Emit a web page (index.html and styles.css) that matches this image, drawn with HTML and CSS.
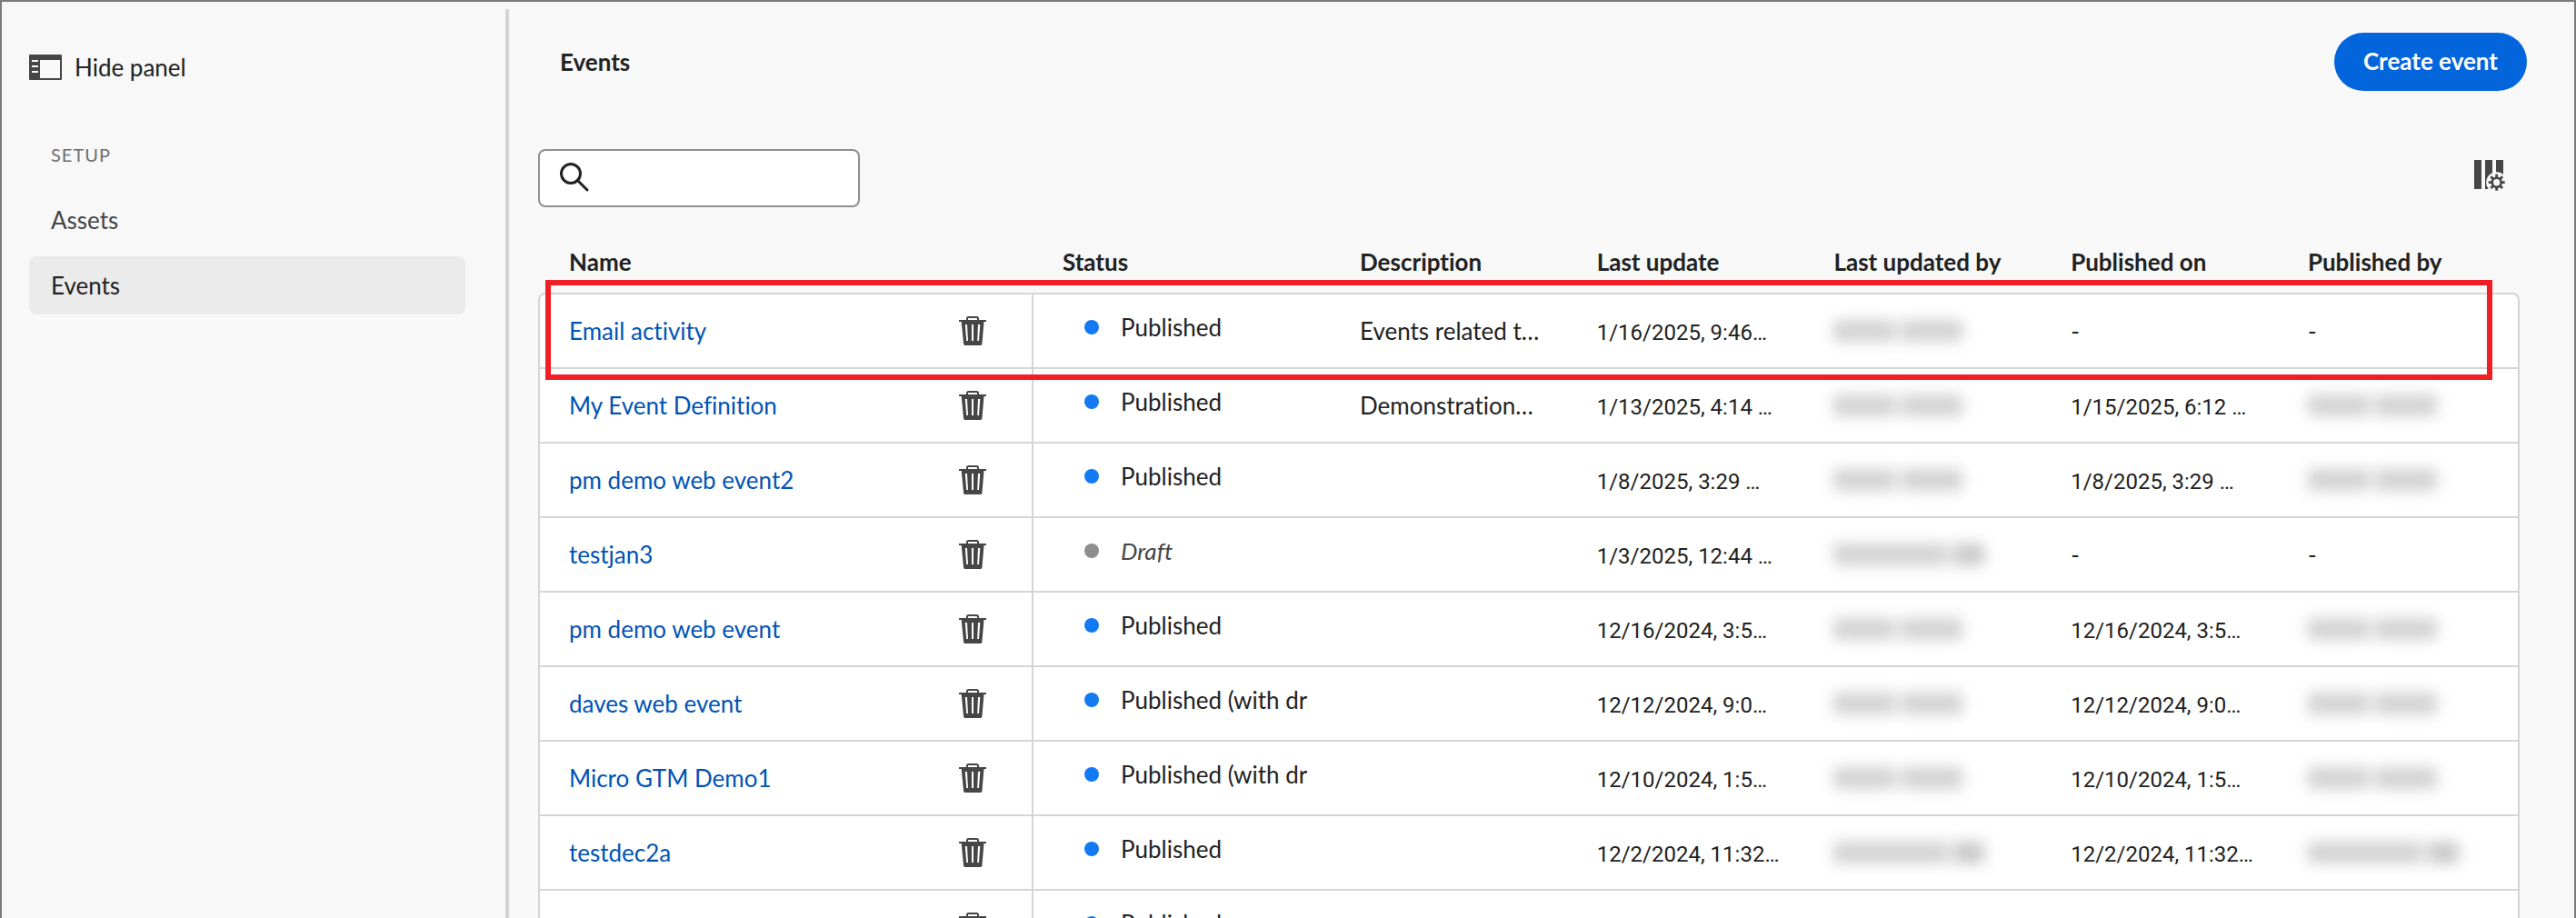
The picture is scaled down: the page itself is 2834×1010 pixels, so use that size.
FILE: index.html
```
<!DOCTYPE html>
<html lang="en">
<head>
<meta charset="utf-8">
<title>Events</title>
<link rel="stylesheet" href="styles.css">
</head>
<body>
<svg class="sprite" aria-hidden="true">
  <symbol id="trash" viewBox="0 0 30 32">
    <path fill="none" stroke="currentColor" stroke-width="2" d="M9 5V2.500Q9 1 10.500 1H19.500Q21 1 21 2.500V5"/>
    <path fill="currentColor" fill-rule="evenodd" d="M0 4H30V6H27.500L25.400 30.600Q25.200 32 24 32H6.500Q5.300 32 5.100 30.600L2.700 6H0ZM6.800 9L8.200 27H10L9 9ZM14 9V27H16V9ZM21 9L20.200 27H22L23.300 9Z"/>
  </symbol>
</svg>
<div class="app">
  <aside class="sidebar">
    <button class="hide-panel" type="button">
      <svg width="36" height="28" viewBox="0 0 36 28" aria-hidden="true"><path fill="#464646" fill-rule="evenodd" d="M1 0H35Q36 0 36 1V27Q36 28 35 28H1Q0 28 0 27V1Q0 0 1 0ZM12 6V26H34V6ZM3 6V8H10V6ZM3 12V14H10V12ZM3 18V20H10V18Z"/></svg>
      Hide panel
    </button>
    <nav aria-label="Setup">
      <h2 class="nav-title">SETUP</h2>
      <ul class="nav-list">
        <li><a class="nav-item" href="#assets">Assets</a></li>
        <li><a class="nav-item active" href="#events" aria-current="page">Events</a></li>
      </ul>
    </nav>
  </aside>
  <main class="main">
    <header class="page-header">
      <h1>Events</h1>
      <button class="create" type="button">Create event</button>
    </header>
    <div class="toolbar">
      <label class="search">
        <svg width="32" height="32" viewBox="0 0 32 32" aria-hidden="true"><g fill="none" stroke="#222" stroke-width="3"><circle cx="12" cy="12" r="10.500"/><path stroke-linecap="round" d="M19.500 19.500L30 30"/></g></svg>
        <input type="search" aria-label="Search events">
      </label>
      <button class="columns" type="button" aria-label="Customize columns">
        <svg width="34" height="34" viewBox="0 0 34 34" aria-hidden="true">
          <path fill="#464646" d="M0 0H8V32H0ZM12 0H20V32H12ZM24 0H32V32H24Z"/>
          <circle cx="24.700" cy="24.700" r="11.500" fill="#f8f8f8"/>
          <g stroke="#464646" fill="none"><circle cx="24.700" cy="24.700" r="5" stroke-width="2.600"/><path stroke-width="2.800" d="M24.700 15.700V20M24.700 29.400V33.700M15.700 24.700H20M29.400 24.700H33.700M18.300 18.300L21 21M28.400 28.400L31.100 31.100M18.300 31.100L21 28.400M28.400 21L31.100 18.300"/></g>
        </svg>
      </button>
    </div>
    <div class="table-wrap">
      <table class="events">
        <colgroup><col class="col-name"><col class="col-status"><col class="col-data"><col class="col-data"><col class="col-data"><col class="col-data"><col></colgroup>
        <thead>
          <tr><th>Name</th><th>Status</th><th>Description</th><th>Last update</th><th>Last updated by</th><th>Published on</th><th>Published by</th></tr>
        </thead>
        <tbody>
          <tr>
            <td><div class="name"><a href="#e1">Email activity</a><button type="button" aria-label="Delete"><svg><use href="#trash"/></svg></button></div></td>
            <td class="status"><div><i class="dot"></i>Published</div></td>
            <td>Events related t…</td><td class="date">1/16/2025, 9:46…</td><td><span class="redacted"><i></i><i></i></span></td><td>-</td><td>-</td>
          </tr>
          <tr>
            <td><div class="name"><a href="#e2">My Event Definition</a><button type="button" aria-label="Delete"><svg><use href="#trash"/></svg></button></div></td>
            <td class="status"><div><i class="dot"></i>Published</div></td>
            <td>Demonstration…</td><td class="date">1/13/2025, 4:14 …</td><td><span class="redacted"><i></i><i></i></span></td><td class="date">1/15/2025, 6:12 …</td><td><span class="redacted"><i></i><i></i></span></td>
          </tr>
          <tr>
            <td><div class="name"><a href="#e3">pm demo web event2</a><button type="button" aria-label="Delete"><svg><use href="#trash"/></svg></button></div></td>
            <td class="status"><div><i class="dot"></i>Published</div></td>
            <td></td><td class="date">1/8/2025, 3:29 …</td><td><span class="redacted"><i></i><i></i></span></td><td class="date">1/8/2025, 3:29 …</td><td><span class="redacted"><i></i><i></i></span></td>
          </tr>
          <tr>
            <td><div class="name"><a href="#e4">testjan3</a><button type="button" aria-label="Delete"><svg><use href="#trash"/></svg></button></div></td>
            <td class="status draft"><div><i class="dot"></i>Draft</div></td>
            <td></td><td class="date">1/3/2025, 12:44 …</td><td><span class="redacted long"><i></i><i></i></span></td><td>-</td><td>-</td>
          </tr>
          <tr>
            <td><div class="name"><a href="#e5">pm demo web event</a><button type="button" aria-label="Delete"><svg><use href="#trash"/></svg></button></div></td>
            <td class="status"><div><i class="dot"></i>Published</div></td>
            <td></td><td class="date">12/16/2024, 3:5…</td><td><span class="redacted"><i></i><i></i></span></td><td class="date">12/16/2024, 3:5…</td><td><span class="redacted"><i></i><i></i></span></td>
          </tr>
          <tr>
            <td><div class="name"><a href="#e6">daves web event</a><button type="button" aria-label="Delete"><svg><use href="#trash"/></svg></button></div></td>
            <td class="status"><div><i class="dot"></i>Published (with dr</div></td>
            <td></td><td class="date">12/12/2024, 9:0…</td><td><span class="redacted"><i></i><i></i></span></td><td class="date">12/12/2024, 9:0…</td><td><span class="redacted"><i></i><i></i></span></td>
          </tr>
          <tr>
            <td><div class="name"><a href="#e7">Micro GTM Demo1</a><button type="button" aria-label="Delete"><svg><use href="#trash"/></svg></button></div></td>
            <td class="status"><div><i class="dot"></i>Published (with dr</div></td>
            <td></td><td class="date">12/10/2024, 1:5…</td><td><span class="redacted"><i></i><i></i></span></td><td class="date">12/10/2024, 1:5…</td><td><span class="redacted"><i></i><i></i></span></td>
          </tr>
          <tr>
            <td><div class="name"><a href="#e8">testdec2a</a><button type="button" aria-label="Delete"><svg><use href="#trash"/></svg></button></div></td>
            <td class="status"><div><i class="dot"></i>Published</div></td>
            <td></td><td class="date">12/2/2024, 11:32…</td><td><span class="redacted long"><i></i><i></i></span></td><td class="date">12/2/2024, 11:32…</td><td><span class="redacted long"><i></i><i></i></span></td>
          </tr>
          <tr>
            <td><div class="name"><span></span><button type="button" aria-label="Delete"><svg><use href="#trash"/></svg></button></div></td>
            <td class="status"><div><i class="dot"></i>Published</div></td>
            <td></td><td></td><td></td><td></td><td></td>
          </tr>
        </tbody>
      </table>
      <div class="callout"></div>
    </div>
  </main>
</div>
</body>
</html>
```
FILE: styles.css
```
*, *::before, *::after { box-sizing: border-box; }

body {
  margin: 0;
  background: #f8f8f8;
  color: #222;
  font: 400 26px/32px Lato, "Open Sans", sans-serif;
  font-variant-ligatures: none;
}

button, input { font: inherit; color: inherit; }
button { border: 0; padding: 0; background: none; cursor: pointer; }
svg { display: block; flex: none; }
.sprite { display: none; }

.app {
  display: flex;
  height: 100vh;
  overflow: hidden;
  border: 2px solid #7c7b7b;
  border-bottom: 0;
}

/* Sidebar */
.sidebar {
  flex: none;
  width: 558px;
  margin-top: 8px;
  padding: 48px 44px 0 30px;
  border-right: 4px solid #d3d3d3;
}
.hide-panel { display: flex; align-items: center; gap: 14px; }
.nav-title {
  margin: 68px 0 28px 24px;
  font-size: 20px;
  line-height: 24px;
  font-weight: 400;
  letter-spacing: 1px;
  color: #6e6e6e;
}
.nav-list {
  display: flex;
  flex-direction: column;
  gap: 8px;
  margin: 0;
  padding: 0;
  list-style: none;
}
.nav-item {
  display: block;
  padding: 16px 24px;
  border-radius: 8px;
  color: #464646;
  text-decoration: none;
}
.nav-item.active { background: #ebebeb; color: #222; }

/* Main */
.main { flex: 1; min-width: 0; padding: 34px 60px 0 32px; }
.page-header {
  display: flex;
  align-items: center;
  justify-content: space-between;
  margin-right: -8px;
  padding-left: 24px;
}
h1 { margin: 0; font-size: 26px; font-weight: 700; }
.create {
  height: 64px;
  padding: 0 32px 2px;
  border-radius: 32px;
  background: #0265dc;
  color: #fff;
  font-weight: 700;
}
.toolbar {
  display: flex;
  justify-content: space-between;
  margin-top: 64px;
}
.search {
  display: flex;
  align-items: center;
  gap: 12px;
  width: 354px;
  height: 64px;
  padding: 0 22px 2px;
  border: 2px solid #8f8f8f;
  border-radius: 8px;
  background: #fff;
}
.search input {
  flex: 1;
  min-width: 0;
  border: 0;
  outline: 0;
  background: none;
}
.columns { align-self: flex-start; margin: 12px 16px 0 0; }

/* Table */
.table-wrap { position: relative; margin-top: 24px; }
.events {
  width: 100%;
  table-layout: fixed;
  border-spacing: 0;
}
.col-name { width: 25%; }
.col-status { width: 15%; }
.col-data { width: 11.96%; }
th {
  padding: 20px 0 18px 32px;
  text-align: left;
  font-weight: 700;
  white-space: nowrap;
}
th:first-child { padding-left: 34px; }
td {
  height: 82px;
  padding: 24px 0 16px 32px;
  border-top: 2px solid #d5d5d5;
  background: #fff;
  vertical-align: baseline;
  white-space: nowrap;
}
td:first-child { border-left: 2px solid #d5d5d5; border-right: 2px solid #d5d5d5; }
td:last-child { border-right: 2px solid #d5d5d5; }
tbody tr:first-child td:first-child { border-top-left-radius: 8px; }
tbody tr:first-child td:last-child { border-top-right-radius: 8px; }

.name { display: flex; justify-content: space-between; padding-right: 50px; }
.name a { color: #0054b6; text-decoration: none; }
.name svg { width: 30px; height: 32px; color: #464646; }

td.status { padding-top: 20px; vertical-align: top; }
.status div {
  display: flex;
  align-items: center;
  gap: 24px;
  margin-right: 24px;
  padding-left: 24px;
  overflow: hidden;
}
.dot { flex: none; width: 16px; height: 16px; border-radius: 50%; background: #147af3; }
.draft { color: #464646; font-style: italic; }
.draft .dot { background: #8e8e8e; }

td.date { font-family: Roboto, Lato, sans-serif; font-size: 24px; }

/* Hidden user names */
.redacted { display: flex; gap: 6px; height: 24px; margin-top: 4px; filter: blur(8px); }
.redacted i { width: 68px; background: #d2d2d2; }
.redacted.long i:first-child { width: 126px; }
.redacted.long i:last-child { width: 34px; background: #c8c8c8; }
td:has(.redacted) { vertical-align: top; }

.callout {
  position: absolute;
  top: 56px;
  left: 8px;
  right: 30px;
  height: 110px;
  border: 6px solid #f01e25;
  pointer-events: none;
}
```
